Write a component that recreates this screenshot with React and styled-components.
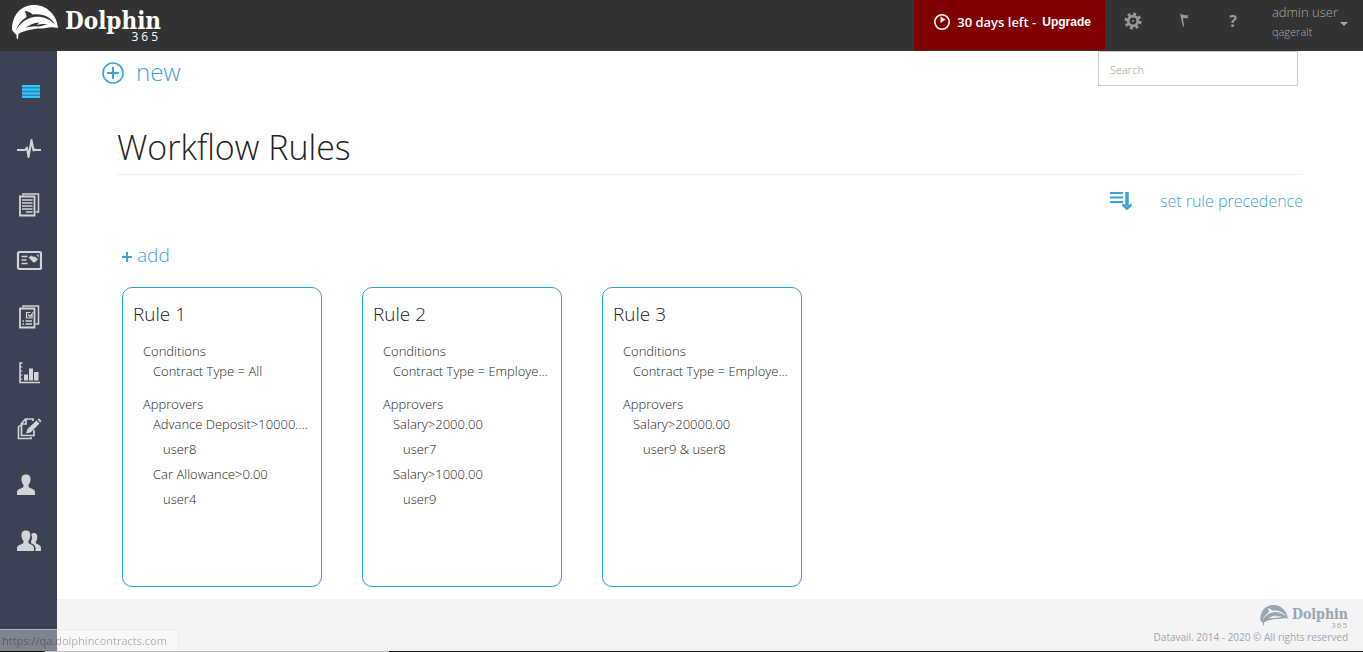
import React from "react";
import styled, { createGlobalStyle } from "styled-components";

const GlobalStyle = createGlobalStyle`
  * {
    box-sizing: border-box;
  }

  body {
    margin: 0;
    background: #fff;
    color: #222;
    font-family: "Open Sans", "Noto Sans", sans-serif;
    font-weight: 300;
    font-size: 13px;
  }

  a {
    text-decoration: none;
    color: inherit;
  }

  button,
  input {
    font: inherit;
    color: inherit;
  }

  button {
    border: 0;
    padding: 0;
    background: none;
    cursor: pointer;
  }

  h1,
  h2,
  h3,
  p {
    margin: 0;
    font-weight: 300;
  }
`;

const rules = [
  {
    name: "Rule 1",
    condition: "Contract Type = All",
    approvers: [
      { limit: "Advance Deposit>10000.00", user: "user8" },
      { limit: "Car Allowance>0.00", user: "user4" },
    ],
  },
  {
    name: "Rule 2",
    condition: "Contract Type = Employee Contract",
    approvers: [
      { limit: "Salary>2000.00", user: "user7" },
      { limit: "Salary>1000.00", user: "user9" },
    ],
  },
  {
    name: "Rule 3",
    condition: "Contract Type = Employee Contract",
    approvers: [{ limit: "Salary>20000.00", user: "user9 & user8" }],
  },
];

// sidebar icons, all drawn on a 26x26 grid
const navItems = [
  {
    label: "Menu",
    active: true,
    icon: (
      <>
        <path d="M6 5h18v13H6z" fill="#2a86b4" stroke="none" />
        <path d="M6 6h18M6 9.700h18M6 13.300h18M6 17h18" strokeWidth="2.200" />
      </>
    ),
  },
  {
    label: "Activity",
    icon: (
      <path
        d="M1 14h8l2-2.500 1.500 9.500 3-17 2 10.500 1-1 1 .5H25"
        strokeWidth="2"
        strokeLinejoin="round"
      />
    ),
  },
  {
    label: "Contracts",
    icon: (
      <>
        <path d="M7 3.500V2h15.500v18h-3" strokeWidth="1.500" />
        <path d="M4 4.500h14.500v19H4z" strokeWidth="1.800" />
        <path d="M6 8h10.500M6 11h10.500M6 14h10.500M6 17h10.500M10 20h6.500" strokeWidth="1.500" />
      </>
    ),
  },
  {
    label: "Agreements",
    icon: (
      <>
        <rect x="2" y="4" width="23" height="17" rx="1.500" strokeWidth="2.200" />
        <path d="M5.500 8.500h6M5.500 12h5M5.500 15.500h6" strokeWidth="1.500" />
        <path d="M12.500 9.500l3-2 2 1.500 1.500-.5 3 3 1-1.500-2.500-3 2-.5v4l-3 3.500-2 .5-3-3z" fill="currentColor" stroke="none" />
      </>
    ),
  },
  {
    label: "Templates",
    icon: (
      <>
        <path d="M7 3.500V2h15.500v18h-3" strokeWidth="1.500" />
        <path d="M4 4.500h14.500v19H4z" strokeWidth="1.800" />
        <path d="M16 10.500v3.500h-5.500V8.500h4M12 10.500l2 2 3.500-4.500" strokeWidth="1.200" />
        <path d="M6.500 17h1.500M9.500 17h6.500M6.500 20h1.500M9.500 20h6.500" strokeWidth="1.500" />
      </>
    ),
  },
  {
    label: "Reports",
    icon: (
      <>
        <path d="M6.500 3H4v19.500h20" strokeWidth="1.600" />
        <path d="M4 7h2.500M4 11h2.500M4 15h2.500M4 19h2.500" strokeWidth="1.200" />
        <path d="M8 14.500h4v6H8zM13 8.500h4v12h-4zM18 12h4.500v8.500H18z" fill="currentColor" stroke="none" />
      </>
    ),
  },
  {
    label: "Drafts",
    icon: (
      <>
        <path d="M5 9l-2.500 2V22.500H15V21" strokeWidth="1.600" />
        <path d="M17 5V3H9.500L5.500 7.500v12H18V14M6 8h4V3.500" strokeWidth="1.700" />
        <path d="M10 17.500l1.500-4.500L20.500 4.500l3 3-9 9zM21.500 3.500l1.500-1 2.500 2.500-1.200 1.500z" fill="currentColor" stroke="none" />
      </>
    ),
  },
  {
    label: "User",
    icon: (
      <path
        d="M10 2.500c3.500 0 4.800 2.200 4.500 5.500-.2 2.500-1.200 4-2 5v2c2 1.500 6.500 2 6.500 5v3H1v-3c0-3 4.500-3.500 6.500-5v-2c-.8-1-1.800-2.500-2-5-.3-3.300 1-5.500 4.500-5.500z"
        fill="currentColor"
        stroke="none"
      />
    ),
  },
  {
    label: "Groups",
    icon: (
      <g fill="currentColor" stroke="none">
        <path d="M10 2.500c3.500 0 4.500 2.200 4.300 5.500-.2 2.500-1.200 4-1.900 5v2c2 1.500 5.600 2 5.600 5v3H1v-3c0-3 4.500-3.500 6.500-5v-2c-.8-1-1.800-2.500-2-5-.3-3.300 1-5.500 4.500-5.500z" />
        <path d="M15.300 6c.8-.8 1.700-1 2.700-1 2.600 0 3.500 1.800 3.300 4.500-.1 2-.8 3.200-1.400 4v1.800c1.600 1.200 5.100 1.700 5.100 4.700v3h-5.500v-3c0-2.500-2-3.800-4.500-4.800v-1.700c1-1.700 1.400-4.500.3-7.500z" />
      </g>
    ),
  },
];

function Logo({ small }) {
  return (
    <LogoLink href="#" aria-label="Dolphin 365" $small={small}>
      <svg viewBox="0 0 46 35" fill="currentColor" fillRule="evenodd" aria-hidden="true">
        <path
          d="M0 25C0 10 9 0 22 0c13 0 23 10 24 23-5-1.500-10-.5-15 .5-7-.5-16 1.500-22 4L6.500 29 6 34.500 4.500 33V30L2 27.500z
          M4 25.500C6 19 10 15 14.500 12c0-2-.5-4-2-6 3.500 0 6 1.500 8 3.500C30 8 39 11.500 43.500 20 37 13 29 11 22 12 15 13 8 18 4 25.500z
          M13 23c4-3 9-5.500 14-5.500L25 20c4-1.500 8-1 11-1-4 1-7 2.500-10 2.500-5-.5-9 .5-13 1.500z"
        />
      </svg>
      <LogoText $small={small}>
        Dolphin
        <LogoNumber $small={small}>365</LogoNumber>
      </LogoText>
    </LogoLink>
  );
}

function RuleCard({ rule }) {
  return (
    <Card>
      <CardTitle>{rule.name}</CardTitle>
      <Group>
        <GroupTitle>Conditions</GroupTitle>
        <Detail>{rule.condition}</Detail>
      </Group>
      <Group>
        <GroupTitle>Approvers</GroupTitle>
        {rule.approvers.map((approver) => (
          <React.Fragment key={approver.limit}>
            <Detail>{approver.limit}</Detail>
            <Approver>{approver.user}</Approver>
          </React.Fragment>
        ))}
      </Group>
    </Card>
  );
}

function App() {
  return (
    <Page>
      <GlobalStyle />
      <Header>
        <Logo />
        <HeaderRight>
          <Trial>
            <svg width="18" height="18" viewBox="0 0 18 18" fill="none" stroke="currentColor">
              <circle cx="9" cy="9" r="7.200" strokeWidth="1.600" />
              <path d="M7.500 3.500v6.500l5-3.500z" fill="currentColor" stroke="none" />
            </svg>
            <span>30 days left -</span>
            <a href="#">Upgrade</a>
          </Trial>
          <IconButton aria-label="Settings">
            <svg width="18" height="18" viewBox="0 0 18 18" fill="none" stroke="currentColor">
              <circle cx="9" cy="9" r="4.800" strokeWidth="2.800" />
              <circle cx="9" cy="9" r="7.300" strokeWidth="2.600" strokeDasharray="3 2.733" />
              <circle cx="9" cy="9" r="1" fill="currentColor" stroke="none" />
            </svg>
          </IconButton>
          <IconButton aria-label="Flag">
            <svg width="18" height="18" viewBox="0 0 18 18" fill="currentColor">
              <path d="M6 1.500l1.500 1c2.500-.5 3.500 1.500 7 .5L13.500 4.500l.8 1.500c-2 .8-3.800-.5-5.300 0L10 14.500H8.800z" />
            </svg>
          </IconButton>
          <IconButton aria-label="Help">?</IconButton>
          <UserButton>
            <span>
              admin user
              <small>qageralt</small>
            </span>
            <Caret />
          </UserButton>
        </HeaderRight>
      </Header>
      <Body>
        <Sidebar>
          {navItems.map((item) => (
            <NavLink href="#" key={item.label} aria-label={item.label} $active={item.active}>
              <svg width="26" height="26" viewBox="0 0 26 26" fill="none" stroke="currentColor">
                {item.icon}
              </svg>
            </NavLink>
          ))}
        </Sidebar>
        <Main>
          <Toolbar>
            <NewButton>
              <svg width="24" height="24" viewBox="0 0 24 24" fill="none" stroke="currentColor" strokeWidth="2">
                <circle cx="12" cy="13" r="10" strokeWidth="1.600" />
                <path d="M12 7v12M6 13h12" />
              </svg>
              new
            </NewButton>
            <Search type="text" placeholder="Search" aria-label="Search" />
          </Toolbar>
          <Content>
            <Title>Workflow Rules</Title>
            <Precedence>
              <svg width="24" height="20" viewBox="0 0 24 20" fill="none" stroke="currentColor" strokeWidth="2">
                <path d="M1 2h13M1 6.500h13M1 11h13" />
                <path d="M18 1v14" strokeWidth="3.500" />
                <path d="M13.500 13.500l4.500 4 4.500-4" strokeWidth="2.500" />
              </svg>
              set rule precedence
            </Precedence>
            <AddButton>
              <svg width="12" height="12" viewBox="0 0 12 12" stroke="currentColor" strokeWidth="2">
                <path d="M6 1v10M1 6h10" />
              </svg>
              add
            </AddButton>
            <Cards>
              {rules.map((rule) => (
                <RuleCard rule={rule} key={rule.name} />
              ))}
            </Cards>
          </Content>
          <Footer>
            <Logo small />
            <p>Datavail. 2014 - 2020 © All rights reserved</p>
          </Footer>
        </Main>
      </Body>
      <BottomEdge />
      <StatusBubble>https://qa.dolphincontracts.com</StatusBubble>
    </Page>
  );
}

const Page = styled.div`
  display: flex;
  flex-direction: column;
  min-height: 100vh;
`;

const Header = styled.header`
  display: flex;
  justify-content: space-between;
  height: 51px;
  padding-left: 12px;
  background: #333;
  color: #fff;
`;

const HeaderRight = styled.div`
  display: flex;
`;

const LogoLink = styled.a`
  display: flex;
  align-items: flex-start;
  gap: ${(props) => (props.$small ? "4px" : "7px")};
  padding-top: ${(props) => (props.$small ? "0" : "5px")};
  color: ${(props) => (props.$small ? "#98a6b3" : "#fff")};

  svg {
    width: ${(props) => (props.$small ? "28px" : "46px")};
    height: ${(props) => (props.$small ? "21px" : "35px")};
  }
`;

const LogoText = styled.span`
  display: flex;
  flex-direction: column;
  font-family: "DejaVu Serif Condensed", "DejaVu Serif", serif;
  font-weight: 700;
  font-size: ${(props) => (props.$small ? "14px" : "24px")};
  line-height: ${(props) => (props.$small ? "18px" : "32px")};
`;

const LogoNumber = styled.span`
  align-self: flex-end;
  margin-top: ${(props) => (props.$small ? "-2px" : "-6px")};
  font-family: "Open Sans", sans-serif;
  font-weight: 400;
  font-size: ${(props) => (props.$small ? "8px" : "12px")};
  line-height: ${(props) => (props.$small ? "8px" : "12px")};
  letter-spacing: ${(props) => (props.$small ? "1px" : "3px")};
`;

const Trial = styled.div`
  display: flex;
  align-items: center;
  gap: 6px;
  height: 50px;
  padding: 0 14px 6px 19px;
  background: #800000;
  font-size: 13px;
  font-weight: 600;

  a {
    font-family: "Liberation Sans", Arial, sans-serif;
    font-size: 12px;
    font-weight: 700;
  }
`;

const IconButton = styled.button`
  display: flex;
  align-items: center;
  justify-content: center;
  width: 50px;
  padding: 0 0 10px 6px;
  color: #999;
  font-size: 16px;
  font-weight: 700;
`;

const UserButton = styled.button`
  display: flex;
  gap: 2px;
  padding: 3px 15px 0 17px;
  color: #aaa;
  font-size: 13px;
  line-height: 19px;
  text-align: left;

  small {
    display: block;
    font-size: 11px;
    line-height: 20px;
  }
`;

const Caret = styled.i`
  margin-top: 19px;
  border: 4px solid transparent;
  border-top-color: #aaa;
  border-bottom: 0;
`;

const Body = styled.div`
  display: flex;
  flex: 1;
`;

const Sidebar = styled.nav`
  display: flex;
  flex-direction: column;
  width: 57px;
  padding: 14px 0 0 1px;
  background: #3c4254;
`;

const NavLink = styled.a`
  display: flex;
  align-items: center;
  justify-content: center;
  height: 56px;
  color: ${(props) => (props.$active ? "#2fc8fa" : "#d3d4d6")};
`;

const Main = styled.main`
  display: flex;
  flex: 1;
  flex-direction: column;
  min-width: 0;
`;

const Toolbar = styled.div`
  display: flex;
  justify-content: space-between;
  align-items: flex-start;
  padding: 0 65px 0 44px;
`;

const NewButton = styled.button`
  display: flex;
  align-items: center;
  gap: 11px;
  color: #3aa3dc;
  font-size: 24px;
  line-height: 42px;
`;

const Search = styled.input`
  width: 200px;
  height: 35px;
  padding: 1px 11px 0;
  border: 1px solid #ccc;
  border-radius: 0;
  background: #fff;
  font-size: 11px;

  &::placeholder {
    color: #999;
  }
`;

const Content = styled.div`
  display: flex;
  flex: 1;
  flex-direction: column;
  align-items: flex-start;
  padding: 30px 60px 12px;
`;

const Title = styled.h1`
  width: 100%;
  padding-bottom: 3px;
  border-bottom: 1px solid #eee;
  font-size: 34px;
  line-height: 48px;
`;

const Precedence = styled.button`
  display: flex;
  align-self: flex-end;
  align-items: center;
  gap: 27px;
  margin-top: 12px;
  color: #3aa3dc;
  font-size: 16px;
  line-height: 28px;
`;

const AddButton = styled.button`
  display: flex;
  align-items: center;
  gap: 4px;
  margin: 26px 0 18px 4px;
  color: #3aa3dc;
  font-size: 19px;
  line-height: 28px;

  svg {
    margin-top: 4px;
  }
`;

const Cards = styled.div`
  display: flex;
  flex-wrap: wrap;
  gap: 40px;
  padding-left: 5px;
`;

const Card = styled.article`
  width: 200px;
  min-height: 300px;
  padding: 10px;
  border: 1px solid #27a0d8;
  border-radius: 10px;
`;

const CardTitle = styled.h2`
  padding-bottom: 2px;
  font-size: 19px;
  line-height: 32px;
`;

const Group = styled.section`
  padding: 9px 0 4px 10px;
`;

const GroupTitle = styled.h3`
  font-size: 13px;
  line-height: 20px;
`;

const Detail = styled.p`
  overflow: hidden;
  padding-left: 10px;
  line-height: 20px;
  text-overflow: ellipsis;
  white-space: nowrap;
`;

const Approver = styled.p`
  padding-left: 20px;
  line-height: 30px;
`;

const Footer = styled.footer`
  display: flex;
  flex-direction: column;
  align-items: flex-end;
  height: 52px;
  padding: 6px 15px 0;
  background: #f4f4f4;
  color: #98a6b3;
  font-size: 10px;
  line-height: 16px;

  p {
    font-weight: 400;
  }
`;

const BottomEdge = styled.div`
  height: 1px;
  background: linear-gradient(90deg, #111 45px, #bbb 45px, #bbb 389px, #111 389px);
`;

const StatusBubble = styled.div`
  position: fixed;
  bottom: 1px;
  left: 0;
  padding: 0 11px 0 2px;
  border: 1px solid rgba(220, 220, 220, 0.5);
  border-width: 1px 1px 0 0;
  border-radius: 0 4px 0 0;
  background: rgba(255, 255, 255, 0.35);
  color: rgba(0, 0, 0, 0.3);
  font-size: 11px;
  font-weight: 400;
  line-height: 21px;
`;

export default App;
